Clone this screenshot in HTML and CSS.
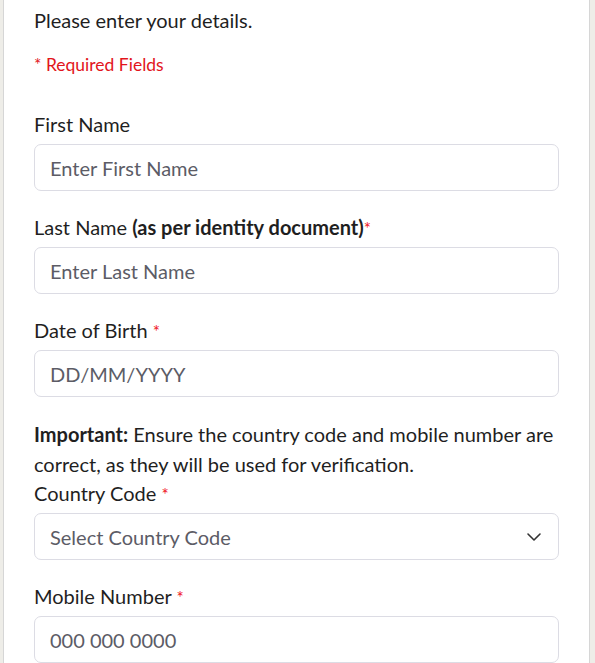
FILE: index.html
```html
<!DOCTYPE html>
<html>
<head>
<meta charset="utf-8">
<link rel="stylesheet" href="styles.css">
</head>
<body>
<div class="card">
  <p class="intro">Please enter your details.</p>
  <p class="required">* Required Fields</p>
  <form class="form">
    <div class="field">
      <label class="label">First Name</label>
      <div class="input"><span class="ph">Enter First Name</span></div>
    </div>
    <div class="field">
      <label class="label">Last Name <b>(as per identity document)</b><span class="star">*</span></label>
      <div class="input"><span class="ph">Enter Last Name</span></div>
    </div>
    <div class="field">
      <label class="label">Date of Birth <span class="star">*</span></label>
      <div class="input"><span class="ph">DD/MM/YYYY</span></div>
    </div>
    <div class="field">
      <p class="note"><b>Important:</b> Ensure the country code and mobile number are correct, as they will be used for verification.</p>
      <label class="label">Country Code <span class="star">*</span></label>
      <div class="input select"><span class="ph">Select Country Code</span>
        <svg class="chev" width="16" height="10" viewBox="0 0 16 10"><path d="M2 2 L8 8 L14 2" fill="none" stroke="#333" stroke-width="1.6" stroke-linecap="round" stroke-linejoin="round"/></svg>
      </div>
    </div>
    <div class="field">
      <label class="label">Mobile Number <span class="star">*</span></label>
      <div class="input"><span class="ph">000 000 0000</span></div>
    </div>
  </form>
</div>
</body>
</html>
```

FILE: styles.css
```css
html, body {
  margin: 0;
  padding: 0;
  background: #eeede8;
  font-family: Lato, "Open Sans", sans-serif;
  color: #1f1f1f;
}
.card {
  margin-left: 3px;
  width: 587px;
  background: #fff;
  border-left: 1px solid #d6d6d6;
  border-right: 1px solid #d6d6d6;
  padding: 6px 30px 0 30px;
  box-sizing: border-box;
  height: 663px;
  overflow: hidden;
}
.intro {
  margin: 0;
  font-size: 20px;
  line-height: 29px;
}
.required {
  margin: 15px 0 0 0;
  font-size: 17.5px;
  line-height: 29px;
  color: #e2151b;
}
.form {
  margin-top: 31px;
  display: flex;
  flex-direction: column;
  gap: 22px;
}
.field {
  display: flex;
  flex-direction: column;
}
.label {
  font-size: 20px;
  line-height: 29px;
  height: 29px;
  margin-bottom: 5px;
}
.label b, .note b {
  font-weight: 700;
}
.star {
  color: #f0141e;
  font-size: 17px;
  line-height: 1;
}
.note {
  margin: 0;
  font-size: 20px;
  line-height: 30px;
}
.input {
  height: 47px;
  box-sizing: border-box;
  border: 1px solid #dcdce4;
  border-radius: 7px;
  display: flex;
  align-items: center;
  padding: 0 15px;
}
.ph {
  font-size: 20px;
  color: #5c5c66;
}
.select {
  justify-content: space-between;
}
.chev {
  margin-right: 1px;
}
```
